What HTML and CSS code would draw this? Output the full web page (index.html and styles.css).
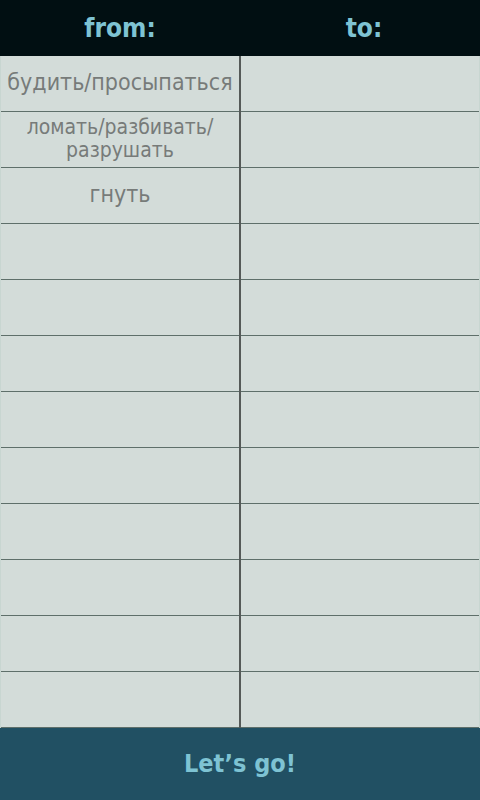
FILE: index.html
```html
<!DOCTYPE html>
<html>
<head>
<meta charset="utf-8">
<link rel="stylesheet" href="styles.css">
</head>
<body>
<div class="app">
  <header class="head">
    <div class="hcell hleft">from:</div>
    <div class="hcell hright">to:</div>
  </header>
  <main class="grid">
    <div class="col left">
      <div class="cell">будить/просыпаться</div>
      <div class="cell cell-small">ломать/разбивать/<br>разрушать</div>
      <div class="cell">гнуть</div>
      <div class="cell"></div>
      <div class="cell"></div>
      <div class="cell"></div>
      <div class="cell"></div>
      <div class="cell"></div>
      <div class="cell"></div>
      <div class="cell"></div>
      <div class="cell"></div>
      <div class="cell"></div>
    </div>
    <div class="divider"></div>
    <div class="col right">
      <div class="cell"></div>
      <div class="cell"></div>
      <div class="cell"></div>
      <div class="cell"></div>
      <div class="cell"></div>
      <div class="cell"></div>
      <div class="cell"></div>
      <div class="cell"></div>
      <div class="cell"></div>
      <div class="cell"></div>
      <div class="cell"></div>
      <div class="cell"></div>
    </div>
  </main>
  <footer class="foot">Let’s go!</footer>
</div>
</body>
</html>
```

FILE: styles.css
```css
* { box-sizing: border-box; }
html, body { margin: 0; padding: 0; }
body {
  width: 480px;
  height: 800px;
  overflow: hidden;
  font-family: "DejaVu Sans", Verdana, sans-serif;
  background: #d3dcd9;
}
.app {
  display: flex;
  flex-direction: column;
  height: 800px;
}
.head {
  height: 56px;
  background: #010f12;
  display: flex;
}
.hcell {
  flex: 1;
  display: flex;
  align-items: center;
  justify-content: center;
  color: #7ec3d3;
  font-family: "DejaVu Sans Condensed", "DejaVu Sans", sans-serif;
  font-weight: bold;
  font-size: 26px;
}
.hleft { padding-left: 4px; }
.hright { padding-left: 12px; }
.grid {
  display: flex;
  height: 672px;
}
.col {
  flex: 1;
  display: flex;
  flex-direction: column;
}
.left { border-left: 1px solid #c8d6d1; }
.right { border-right: 1px solid #c8d6d1; }
.divider {
  width: 2px;
  background: #555a58;
}
.cell {
  height: 56px;
  flex: none;
  border-bottom: 1px solid #5e6f6a;
  background: #d3dcd9;
  display: flex;
  align-items: center;
  justify-content: center;
  text-align: center;
  color: #777b79;
  font-family: "DejaVu Sans Condensed", "DejaVu Sans", sans-serif;
  font-size: 23px;
  line-height: 24px;
  padding-bottom: 3px;
}
.cell-small {
  font-size: 21px;
  line-height: 23px;
  padding-bottom: 1px;
}
.foot {
  flex: 1;
  background: #215063;
  color: #7ec3d3;
  font-family: "DejaVu Sans Condensed", "DejaVu Sans", sans-serif;
  font-weight: bold;
  font-size: 25px;
  display: flex;
  align-items: center;
  justify-content: center;
  padding-bottom: 2px;
}
```
